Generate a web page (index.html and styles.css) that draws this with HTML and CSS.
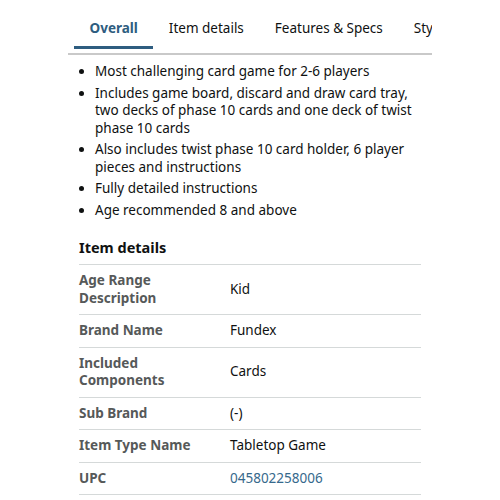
FILE: index.html
```html
<!DOCTYPE html>
<html lang="en">
<head>
    <meta charset="UTF-8">
    <meta name="viewport" content="width=device-width, initial-scale=1.0">
    <title>Product details</title>
    <link rel="stylesheet" href="styles.css">
</head>
<body>
    <div class="panel">
        <div class="tabs">
            <div class="tab active">Overall</div>
            <div class="tab">Item details</div>
            <div class="tab">Features &amp; Specs</div>
            <div class="tab">Style</div>
        </div>

        <div class="content">
            <ul class="bullets">
                <li>Most challenging card game for 2-6 players</li>
                <li>Includes game board, discard and draw card tray, two decks of phase 10 cards and one deck of twist phase 10 cards</li>
                <li>Also includes twist phase 10 card holder, 6 player pieces and instructions</li>
                <li>Fully detailed instructions</li>
                <li>Age recommended 8 and above</li>
            </ul>

            <h3>Item details</h3>
            <table class="details">
                <tr><th>Age Range<br>Description</th><td>Kid</td></tr>
                <tr><th>Brand Name</th><td>Fundex</td></tr>
                <tr><th>Included<br>Components</th><td>Cards</td></tr>
                <tr><th>Sub Brand</th><td>(-)</td></tr>
                <tr><th>Item Type Name</th><td>Tabletop Game</td></tr>
                <tr><th>UPC</th><td><a href="#">045802258006</a></td></tr>
            </table>
        </div>
    </div>
</body>
</html>
```

FILE: styles.css
```css
body {
    font-family: "Noto Sans", "Open Sans", sans-serif;
    background: #fff;
    color: #0f1111;
    margin: 0;
}
.panel {
    width: 364px;
    margin-left: 68px;
    overflow: hidden;
}
.tabs {
    display: flex;
    white-space: nowrap;
    padding: 17px 0 0 6px;
    border-bottom: 2px solid #c9c9c9;
    margin-bottom: 8px;
}
.tab {
    font-size: 13.5px;
    line-height: 22px;
    padding: 0 15.5px 7px;
    border-bottom: 3px solid transparent;
    margin-bottom: 4px;
}
.tab.active {
    font-weight: 700;
    color: #2e5d80;
    border-bottom-color: #2e5d80;
}
.content {
    padding: 0 11px;
}
.bullets {
    margin: 0;
    padding-left: 16px;
    font-size: 13.5px;
    line-height: 17.5px;
}
.bullets li {
    margin-bottom: 4px;
}
h3 {
    font-size: 14.5px;
    margin: 18px 0 0;
    padding-bottom: 7px;
    border-bottom: 1px solid #d5d9d9;
}
.details {
    width: 100%;
    border-collapse: collapse;
    font-size: 13.5px;
    line-height: 17.5px;
}
.details th {
    text-align: left;
    font-weight: 700;
    color: #565959;
    width: 151px;
}
.details th, .details td {
    padding: 7px 0;
    border-bottom: 1px solid #d5d9d9;
    vertical-align: middle;
}
.details a {
    color: #36698c;
    text-decoration: none;
}
```
